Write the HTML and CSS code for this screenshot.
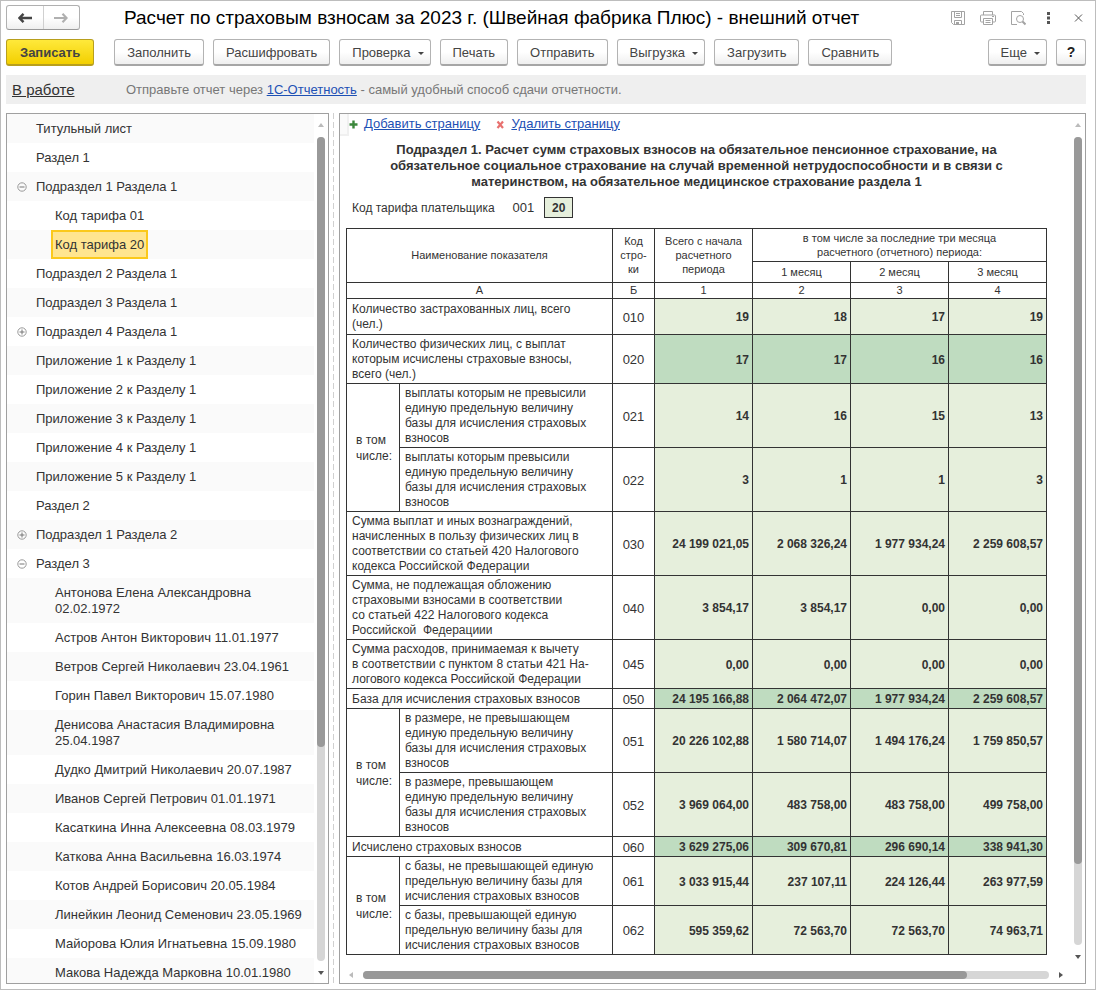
FILE: index.html
```html
<!DOCTYPE html>
<html lang="ru">

<head>
  <meta charset="UTF-8">
  <meta name="viewport" content="width=device-width, initial-scale=1.0">
  <title>Расчет по страховым взносам</title>
  <link rel="stylesheet" href="styles.css">
</head>

<body>
  <header class="titlebar">
    <div class="nav">
      <button type="button" aria-label="Назад">
        <svg width="14" height="10" viewBox="0 0 14 10"><path d="M5.500 0.800L1.500 5l4 4.200M2 5H14" fill="none" stroke="#444" stroke-width="2.400"/></svg>
      </button>
      <button type="button" aria-label="Вперед">
        <svg width="14" height="10" viewBox="0 0 14 10"><path d="M8.500 0.800L12.500 5l-4 4.200M12 5H0" fill="none" stroke="#b0b0b0" stroke-width="2.200"/></svg>
      </button>
    </div>
    <h1>Расчет по страховым взносам за 2023 г. (Швейная фабрика Плюс) - внешний отчет</h1>
    <div class="tools">
      <button type="button" aria-label="Сохранить">
        <svg width="16" height="16" viewBox="0 0 16 16" fill="none" stroke="#a3a3a3"><path d="M1.500 1.500h13v13h-11l-2-2z"/><path d="M4.500 1.500v6h7v-6M6 3.500h4M6 5.500h4M4.500 14.500v-4h7v4"/><path d="M6 12h3v2.500h-3z" fill="#a3a3a3" stroke="none"/></svg>
      </button>
      <button type="button" aria-label="Печать">
        <svg width="16" height="16" viewBox="0 0 16 16" fill="none" stroke="#a3a3a3"><path d="M3.500 5V1.500h9V5M3.500 12h-2a1 1 0 0 1-1-1V6a1 1 0 0 1 1-1h13a1 1 0 0 1 1 1v5a1 1 0 0 1-1 1h-2"/><path d="M3.500 8.500h9v6h-9zM5.500 10.500h5M5.500 12.500h5M12 6.500h2"/></svg>
      </button>
      <button type="button" aria-label="Просмотр">
        <svg width="16" height="16" viewBox="0 0 16 16" fill="none" stroke="#a3a3a3"><path d="M7 14.500H1.500v-13h10l2 2V5"/><circle cx="10" cy="9" r="3.500"/><path d="M12.500 11.500l3 3" stroke-width="2"/></svg>
      </button>
      <button type="button" aria-label="Меню">
        <svg width="16" height="16" viewBox="0 0 16 16" fill="#555"><path d="M7 2h3v3H7zM7 6.500h3v3H7zM7 11h3v3H7z"/></svg>
      </button>
      <button type="button" aria-label="Закрыть">
        <svg width="16" height="16" viewBox="0 0 16 16"><path d="M5 4.500l7 7M12 4.500l-7 7" stroke="#555"/></svg>
      </button>
    </div>
  </header>

  <div class="toolbar">
    <button type="button" class="btn primary">Записать</button>
    <button type="button" class="btn">Заполнить</button>
    <button type="button" class="btn">Расшифровать</button>
    <button type="button" class="btn drop">Проверка</button>
    <button type="button" class="btn">Печать</button>
    <button type="button" class="btn">Отправить</button>
    <button type="button" class="btn drop">Выгрузка</button>
    <button type="button" class="btn">Загрузить</button>
    <button type="button" class="btn">Сравнить</button>
    <button type="button" class="btn drop more">Еще</button>
    <button type="button" class="btn help">?</button>
  </div>

  <div class="status">
    <a href="#" class="state">В работе</a>
    <p>Отправьте отчет через <a href="#">1С-Отчетность</a> - самый удобный способ сдачи отчетности.</p>
  </div>

  <main>
    <nav class="tree">
      <ul>
        <li>Титульный лист</li>
        <li>Раздел 1</li>
        <li><button type="button" class="toggle" aria-label="Свернуть"><svg width="10" height="10" viewBox="0 0 10 10"><circle cx="5" cy="5" r="4.200"/><path d="M2.500 5h5"/></svg></button>Подраздел 1 Раздела 1</li>
        <li class="sub">Код тарифа 01</li>
        <li class="sub selected"><span>Код тарифа 20</span></li>
        <li>Подраздел 2 Раздела 1</li>
        <li>Подраздел 3 Раздела 1</li>
        <li><button type="button" class="toggle" aria-label="Развернуть"><svg width="10" height="10" viewBox="0 0 10 10"><circle cx="5" cy="5" r="4.200"/><path d="M2.500 5h5M5 2.500v5"/></svg></button>Подраздел 4 Раздела 1</li>
        <li>Приложение 1 к Разделу 1</li>
        <li>Приложение 2 к Разделу 1</li>
        <li>Приложение 3 к Разделу 1</li>
        <li>Приложение 4 к Разделу 1</li>
        <li>Приложение 5 к Разделу 1</li>
        <li>Раздел 2</li>
        <li><button type="button" class="toggle" aria-label="Развернуть"><svg width="10" height="10" viewBox="0 0 10 10"><circle cx="5" cy="5" r="4.200"/><path d="M2.500 5h5M5 2.500v5"/></svg></button>Подраздел 1 Раздела 2</li>
        <li><button type="button" class="toggle" aria-label="Свернуть"><svg width="10" height="10" viewBox="0 0 10 10"><circle cx="5" cy="5" r="4.200"/><path d="M2.500 5h5"/></svg></button>Раздел 3</li>
        <li class="sub">Антонова Елена Александровна 02.02.1972</li>
        <li class="sub">Астров Антон Викторович 11.01.1977</li>
        <li class="sub">Ветров Сергей Николаевич 23.04.1961</li>
        <li class="sub">Горин Павел Викторович 15.07.1980</li>
        <li class="sub">Денисова Анастасия Владимировна 25.04.1987</li>
        <li class="sub">Дудко Дмитрий Николаевич 20.07.1987</li>
        <li class="sub">Иванов Сергей Петрович 01.01.1971</li>
        <li class="sub">Касаткина Инна Алексеевна 08.03.1979</li>
        <li class="sub">Каткова Анна Васильевна 16.03.1974</li>
        <li class="sub">Котов Андрей Борисович 20.05.1984</li>
        <li class="sub">Линейкин Леонид Семенович 23.05.1969</li>
        <li class="sub">Майорова Юлия Игнатьевна 15.09.1980</li>
        <li class="sub">Макова Надежда Марковна 10.01.1980</li>
      </ul>
      <div class="scroll-y">
        <i class="arrow up"></i>
        <div class="track"><div class="thumb"></div></div>
        <i class="arrow down"></i>
      </div>
    </nav>

    <div class="splitter"></div>

    <section class="report">
      <div class="report-body">
        <div class="sheet">
          <div class="pages">
            <span class="corner"></span>
            <svg width="9" height="9" viewBox="0 0 9 9"><path d="M4.500 0.500v8M0.500 4.500h8" stroke="#3b873b" stroke-width="2.400"/></svg>
            <a href="#">Добавить страницу</a>
            <svg class="del" width="9" height="9" viewBox="0 0 9 9"><path d="M1.500 1.500l5.500 6.500M7 1.500L1.500 8" stroke="#e8716f" stroke-width="2.200"/></svg>
            <a href="#">Удалить страницу</a>
          </div>

          <h2>Подраздел 1. Расчет сумм страховых взносов на обязательное пенсионное страхование, на<br>обязательное социальное страхование на случай временной нетрудоспособности и в связи с<br>материнством, на обязательное медицинское страхование раздела 1</h2>

          <div class="tariff">
            <label for="tariff">Код тарифа плательщика</label>
            <span>001</span>
            <input type="text" id="tariff" value="20">
          </div>

          <table>
            <colgroup>
              <col class="c-group"><col class="c-name"><col class="c-code"><col class="c-sum"><col class="c-sum"><col class="c-sum"><col class="c-sum">
            </colgroup>
            <thead>
              <tr class="h-top">
                <th colspan="2" rowspan="2">Наименование показателя</th>
                <th rowspan="2">Код<br>стро-<br>ки</th>
                <th rowspan="2">Всего с начала<br>расчетного<br>периода</th>
                <th colspan="3">в том числе за последние три месяца<br>расчетного (отчетного) периода:</th>
              </tr>
              <tr class="h-month"><th>1 месяц</th><th>2 месяц</th><th>3 месяц</th></tr>
              <tr class="h-num"><th colspan="2">А</th><th>Б</th><th>1</th><th>2</th><th>3</th><th>4</th></tr>
            </thead>
            <tbody>
              <tr class="two">
                <td colspan="2">Количество застрахованных лиц, всего<br>(чел.)</td>
                <td class="code">010</td>
                <td class="num">19</td><td class="num">18</td><td class="num">17</td><td class="num">19</td>
              </tr>
              <tr class="total">
                <td colspan="2">Количество физических лиц, с выплат<br>которым исчислены страховые взносы,<br>всего (чел.)</td>
                <td class="code">020</td>
                <td class="num">17</td><td class="num">17</td><td class="num">16</td><td class="num">16</td>
              </tr>
              <tr>
                <td class="group" rowspan="2">в том<br>числе:</td>
                <td>выплаты которым не превысили<br>единую предельную величину<br>базы для исчисления страховых<br>взносов</td>
                <td class="code">021</td>
                <td class="num">14</td><td class="num">16</td><td class="num">15</td><td class="num">13</td>
              </tr>
              <tr>
                <td>выплаты которым превысили<br>единую предельную величину<br>базы для исчисления страховых<br>взносов</td>
                <td class="code">022</td>
                <td class="num">3</td><td class="num">1</td><td class="num">1</td><td class="num">3</td>
              </tr>
              <tr>
                <td colspan="2">Сумма выплат и иных вознаграждений,<br>начисленных в пользу физических лиц в<br>соответствии со статьей 420 Налогового<br>кодекса Российской Федерации</td>
                <td class="code">030</td>
                <td class="num">24 199 021,05</td><td class="num">2 068 326,24</td><td class="num">1 977 934,24</td><td class="num">2 259 608,57</td>
              </tr>
              <tr>
                <td colspan="2">Сумма, не подлежащая обложению<br>страховыми взносами в соответствии<br>со статьей 422 Налогового кодекса<br>Российской&nbsp; Федерациии</td>
                <td class="code">040</td>
                <td class="num">3 854,17</td><td class="num">3 854,17</td><td class="num">0,00</td><td class="num">0,00</td>
              </tr>
              <tr>
                <td colspan="2">Сумма расходов, принимаемая к вычету<br>в соответствии с пунктом 8 статьи 421 На-<br>логового кодекса Российской Федерации</td>
                <td class="code">045</td>
                <td class="num">0,00</td><td class="num">0,00</td><td class="num">0,00</td><td class="num">0,00</td>
              </tr>
              <tr class="one total">
                <td colspan="2">База для исчисления страховых взносов</td>
                <td class="code">050</td>
                <td class="num">24 195 166,88</td><td class="num">2 064 472,07</td><td class="num">1 977 934,24</td><td class="num">2 259 608,57</td>
              </tr>
              <tr>
                <td class="group" rowspan="2">в том<br>числе:</td>
                <td>в размере, не превышающем<br>единую предельную величину<br>базы для исчисления страховых<br>взносов</td>
                <td class="code">051</td>
                <td class="num">20 226 102,88</td><td class="num">1 580 714,07</td><td class="num">1 494 176,24</td><td class="num">1 759 850,57</td>
              </tr>
              <tr>
                <td>в размере, превышающем<br>единую предельную величину<br>базы для исчисления страховых<br>взносов</td>
                <td class="code">052</td>
                <td class="num">3 969 064,00</td><td class="num">483 758,00</td><td class="num">483 758,00</td><td class="num">499 758,00</td>
              </tr>
              <tr class="one total">
                <td colspan="2">Исчислено страховых взносов</td>
                <td class="code">060</td>
                <td class="num">3 629 275,06</td><td class="num">309 670,81</td><td class="num">296 690,14</td><td class="num">338 941,30</td>
              </tr>
              <tr>
                <td class="group" rowspan="2">в том<br>числе:</td>
                <td>с базы, не превышающей единую<br>предельную величину базы для<br>исчисления страховых взносов</td>
                <td class="code">061</td>
                <td class="num">3 033 915,44</td><td class="num">237 107,11</td><td class="num">224 126,44</td><td class="num">263 977,59</td>
              </tr>
              <tr>
                <td>с базы, превышающей единую<br>предельную величину базы для<br>исчисления страховых взносов</td>
                <td class="code">062</td>
                <td class="num">595 359,62</td><td class="num">72 563,70</td><td class="num">72 563,70</td><td class="num">74 963,71</td>
              </tr>
            </tbody>
          </table>
        </div>
        <div class="scroll-y">
          <i class="arrow up"></i>
          <div class="track"><div class="thumb"></div></div>
          <i class="arrow down"></i>
        </div>
      </div>
      <div class="scroll-x">
        <i class="arrow left"></i>
        <div class="track"><div class="thumb"></div></div>
        <i class="arrow right"></i>
      </div>
    </section>
  </main>
</body>

</html>
```

FILE: styles.css
```css
* {
  box-sizing: border-box;
}

body {
  font-family: "Liberation Sans", Arial, sans-serif;
  font-size: 13px;
  line-height: 16px;
  color: #333;
  margin: 0;
  padding: 4px 9px 5px 5px;
  height: 100vh;
  display: flex;
  flex-direction: column;
  background-color: #fff;
  border: 1px solid #bdbdbd;
}

button {
  font-family: inherit;
  padding: 0;
}

a {
  color: #1d50b4;
}

.titlebar {
  display: flex;
  align-items: center;
  height: 25px;
}

.nav {
  display: flex;
  width: 74px;
  height: 25px;
  border: 1px solid #b0b0b0;
  border-bottom-color: #999;
  border-radius: 3px;
  background: linear-gradient(#fff 50%, #efefef);
}

.nav button {
  flex: 1;
  display: flex;
  align-items: center;
  justify-content: center;
  border: none;
  background: none;
}

.nav button + button {
  border-left: 1px solid #d0d0d0;
}

h1 {
  flex: 1;
  margin: 0 0 0 44px;
  font-size: 19px;
  line-height: 24px;
  font-weight: normal;
  color: #000;
  white-space: nowrap;
}

.tools {
  display: flex;
  gap: 14px;
}

.tools button {
  width: 16px;
  height: 16px;
  border: none;
  background: none;
}

.tools svg {
  display: block;
}

.toolbar {
  display: flex;
  gap: 9px;
  margin-top: 9px;
}

.btn {
  height: 27px;
  padding: 0 12px;
  border: 1px solid #b3b3b3;
  border-bottom: 2px solid #a6a6a6;
  border-radius: 3px;
  background: linear-gradient(#fff 50%, #efefef);
  font-size: 13px;
  color: #444;
  white-space: nowrap;
}

.primary {
  margin-right: 11px;
  padding: 0 13px;
  border-color: #b89f1d;
  background: linear-gradient(#ffe93b, #f3cf00);
  font-weight: bold;
}

.drop::after {
  content: "";
  display: inline-block;
  margin-left: 7px;
  vertical-align: middle;
  border: 3px solid transparent;
  border-top-color: #444;
  border-bottom: none;
}

.drop {
  padding-right: 6px;
}

.more {
  margin-left: auto;
}

.help {
  width: 30px;
  padding: 0;
  font-size: 14px;
  font-weight: bold;
  color: #222;
}

.status {
  display: flex;
  align-items: center;
  height: 29px;
  margin-top: 9px;
  padding-left: 6px;
  background-color: #efefef;
  color: #777;
}

.status p {
  margin: 0;
}

.state {
  width: 114px;
  font-size: 15px;
  color: #333;
}

main {
  flex: 1;
  display: flex;
  min-height: 0;
  margin-top: 9px;
}

/* дерево разделов */
.tree {
  display: flex;
  width: 323px;
  flex-shrink: 0;
  border: 1px solid #a0a0a0;
  overflow: hidden;
}

.tree ul {
  flex: 1;
  margin: 0;
  padding: 0;
  list-style: none;
}

.tree li {
  display: flex;
  align-items: center;
  padding: 7px 10px 6px 29px;
}

.tree li:nth-child(odd) {
  background-color: #fafafa;
}

.tree .sub {
  padding-left: 48px;
}

.toggle {
  width: 10px;
  height: 10px;
  margin: 0 9px 0 -19px;
  border: none;
  background: none;
}

.toggle svg {
  display: block;
  fill: none;
  stroke: #777;
}

.toggle circle {
  stroke: #999;
}

.tree .selected {
  padding: 0 0 0 44px;
}

.selected span {
  padding: 5px 2px 4px;
  border: 2px solid #fbc91b;
  background-color: #ffe590;
}

.splitter {
  width: 1px;
  margin: 0 5px 0 4px;
  background: repeating-linear-gradient(#d0d0d0 0 6px, transparent 6px 9px);
}

/* полосы прокрутки */
.scroll-y {
  display: flex;
  flex-direction: column;
  align-items: center;
  width: 14px;
  flex-shrink: 0;
  padding: 9px 0 8px;
}

.scroll-y .track {
  flex: 1;
  width: 8px;
  margin: 10px 0;
  border-radius: 4px;
  background-color: #d6d6d6;
}

.scroll-y .thumb {
  height: 74%;
  border-radius: 4px;
  background-color: #999;
}

.report-body .thumb {
  height: 90%;
}

.scroll-x {
  display: flex;
  align-items: center;
  height: 16px;
  padding: 0 22px 0 9px;
}

.scroll-x .track {
  flex: 1;
  height: 8px;
  margin: 0 10px;
  border-radius: 4px;
  background-color: #d6d6d6;
}

.scroll-x .thumb {
  width: 88%;
  height: 8px;
  border-radius: 4px;
  background-color: #999;
}

.arrow {
  border: 3px solid transparent;
}

.up {
  border-top: none;
  border-bottom: 4px solid #bbb;
}

.down {
  border-bottom: none;
  border-top: 4px solid #555;
}

.left {
  border-left: none;
  border-right: 4px solid #bbb;
}

.right {
  border-right: none;
  border-left: 4px solid #555;
}

/* отчет */
.report {
  flex: 1;
  min-width: 0;
  display: flex;
  flex-direction: column;
  border: 1px solid #a0a0a0;
}

.report-body {
  flex: 1;
  min-height: 0;
  display: flex;
}

.sheet {
  flex: 1;
  min-width: 0;
  overflow: hidden;
}

.pages {
  display: flex;
  align-items: center;
  height: 20px;
}

.pages a {
  margin-left: 6px;
}

.pages .del {
  margin-left: 16px;
}

.corner {
  align-self: flex-start;
  width: 9px;
  height: 22px;
  border: solid #f0f0f0;
  border-width: 0 2px 2px 0;
  background-color: #fafafa;
}

h2 {
  width: 701px;
  margin: 8px 0 0 6px;
  font-size: 13px;
  line-height: 16px;
  text-align: center;
}

.tariff {
  display: flex;
  align-items: center;
  margin: 7px 0 10px 12px;
}

.tariff label {
  font-size: 12px;
}

.tariff span {
  margin: 0 10px 0 18px;
}

.tariff input {
  width: 29px;
  height: 21px;
  padding: 0;
  border: 1px solid #333;
  background-color: #e6efdc;
  font: bold 12px "Liberation Sans", Arial, sans-serif;
  color: #333;
  text-align: center;
}

table {
  width: 701px;
  margin-left: 6px;
  table-layout: fixed;
  border-spacing: 0;
  border: solid #333;
  border-width: 1px 0 0 1px;
  font-size: 12px;
  line-height: 15px;
}

.c-group {
  width: 53px;
}

.c-name {
  width: 213px;
}

.c-code {
  width: 42px;
}

.c-sum {
  width: 98px;
}

th,
td {
  padding: 2px 0 1px 5px;
  border: solid #333;
  border-width: 0 1px 1px 0;
  text-align: left;
  white-space: nowrap;
}

th {
  padding: 0 0 1px;
  font-size: 11px;
  line-height: 14px;
  font-weight: normal;
  text-align: center;
}

.h-top {
  height: 33px;
}

.h-month {
  height: 21px;
}

.h-num {
  height: 16px;
}

.two {
  height: 36px;
}

.one {
  height: 20px;
}

.group {
  padding-left: 9px;
  line-height: 16px;
}

.code {
  padding-left: 0;
  font-size: 13px;
  text-align: center;
}

.num {
  padding: 2px 3px 0 0;
  background-color: #e6efdc;
  font-weight: bold;
  text-align: right;
}

.total .num {
  background-color: #bfdcc0;
}
```
